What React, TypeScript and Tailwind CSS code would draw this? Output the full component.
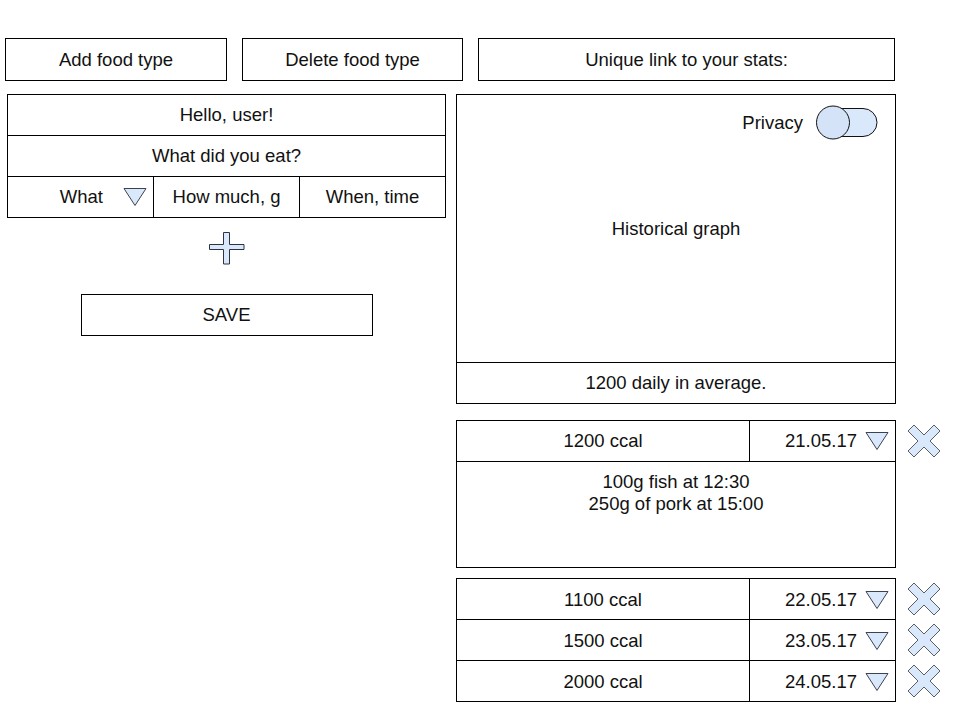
import React from 'react';

function DownTriangle() {
  return (
    <svg width="24" height="20" viewBox="0 0 24 20">
      <polygon points="1,1.5 23,1.5 12,18.5" fill="#dae8fc" stroke="#3b4350" strokeWidth="1" />
    </svg>
  );
}

function DeleteCross() {
  return (
    <svg width="34" height="34" viewBox="0 0 34 34">
      <polygon
        points="7,1 17,11 27,1 33,7 23,17 33,27 27,33 17,23 7,33 1,27 11,17 1,7"
        fill="#dae8fc"
        stroke="#5a5f66"
        strokeWidth="1"
      />
    </svg>
  );
}

function PlusIcon() {
  return (
    <svg width="36" height="33" viewBox="0 0 36 33">
      <polygon
        points="14.5,0.5 20.5,0.5 20.5,12.5 35,12.5 35,17.5 20.5,17.5 20.5,32 14.5,32 14.5,17.5 0.5,17.5 0.5,12.5 14.5,12.5"
        fill="#dae8fc"
        stroke="#2c3440"
        strokeWidth="1"
      />
    </svg>
  );
}

function PrivacyToggle() {
  return (
    <svg width="64" height="36" viewBox="0 0 64 36">
      <rect x="12" y="3.5" width="50" height="28" rx="14" fill="#dae8fc" stroke="#111" strokeWidth="1" />
      <circle cx="18" cy="17.5" r="16.5" fill="#d4e3f7" stroke="#111" strokeWidth="1" />
    </svg>
  );
}

const history = [
  { kcal: '1100 ccal', date: '22.05.17' },
  { kcal: '1500 ccal', date: '23.05.17' },
  { kcal: '2000 ccal', date: '24.05.17' },
];

export default function App() {
  return (
    <div className="w-[960px] h-[720px] bg-white font-['Liberation_Sans',Arial,sans-serif] text-[18.5px] text-[#111] pt-[38px] pl-[5px] overflow-hidden">
      {/* Top actions */}
      <div className="flex gap-[15px]">
        <div className="w-[222px] h-[43px] border border-black flex items-center justify-center">Add food type</div>
        <div className="w-[221px] h-[43px] border border-black flex items-center justify-center">Delete food type</div>
        <div className="w-[417px] h-[43px] border border-black flex items-center justify-center">Unique link to your stats:</div>
      </div>

      <div className="flex items-start mt-[13px] ml-[2px]">
        {/* Left column: entry form */}
        <div className="w-[439px] flex flex-col items-center">
          <div className="w-full border border-black">
            <div className="h-[40px] flex items-center justify-center">Hello, user!</div>
            <div className="h-[41px] border-t border-black flex items-center justify-center">What did you eat?</div>
            <div className="h-[41px] border-t border-black flex">
              <div className="w-[145px] flex items-center justify-end gap-[20px] pr-[6px]">
                <span>What</span>
                <DownTriangle />
              </div>
              <div className="w-[146px] border-l border-black flex items-center justify-center">How much, g</div>
              <div className="flex-1 border-l border-black flex items-center justify-center">When, time</div>
            </div>
          </div>
          <div className="mt-[14px]">
            <PlusIcon />
          </div>
          <div className="mt-[29px] w-[292px] h-[42px] border border-black flex items-center justify-center">SAVE</div>
        </div>

        {/* Right column: stats */}
        <div className="ml-[10px] flex flex-col">
          <div className="w-[440px] h-[310px] border border-black flex flex-col">
            <div className="relative flex-1 flex items-center justify-center">
              <span>Historical graph</span>
              <div className="absolute top-[10px] right-[16px] flex items-center gap-[12px]">
                <span>Privacy</span>
                <PrivacyToggle />
              </div>
            </div>
            <div className="h-[41px] border-t border-black flex items-center justify-center">1200 daily in average.</div>
          </div>

          {/* Expanded day */}
          <div className="mt-[16px] flex items-start">
            <div className="w-[440px] h-[148px] border border-black flex flex-col">
              <div className="h-[41px] border-b border-black flex">
                <div className="w-[292px] flex items-center justify-center">1200 ccal</div>
                <div className="flex-1 border-l border-black flex items-center justify-end gap-[8px] pr-[6px]">
                  <span>21.05.17</span>
                  <DownTriangle />
                </div>
              </div>
              <div className="pt-[9px] text-center leading-[22px]">
                <div>100g fish at 12:30</div>
                <div>250g of pork at 15:00</div>
              </div>
            </div>
            <div className="ml-[11px] mt-[4px]">
              <DeleteCross />
            </div>
          </div>

          {/* Collapsed days */}
          <div className="mt-[10px] flex flex-col">
            {history.map((day, i) => (
              <div key={day.date} className={`flex items-center ${i > 0 ? '-mt-px' : ''}`}>
                <div className="w-[440px] h-[42px] border border-black flex">
                  <div className="w-[292px] flex items-center justify-center pt-[2px]">{day.kcal}</div>
                  <div className="flex-1 border-l border-black flex items-center justify-end gap-[8px] pr-[6px] pt-[2px]">
                    <span>{day.date}</span>
                    <DownTriangle />
                  </div>
                </div>
                <div className="ml-[11px]">
                  <DeleteCross />
                </div>
              </div>
            ))}
          </div>
        </div>
      </div>
    </div>
  );
}
